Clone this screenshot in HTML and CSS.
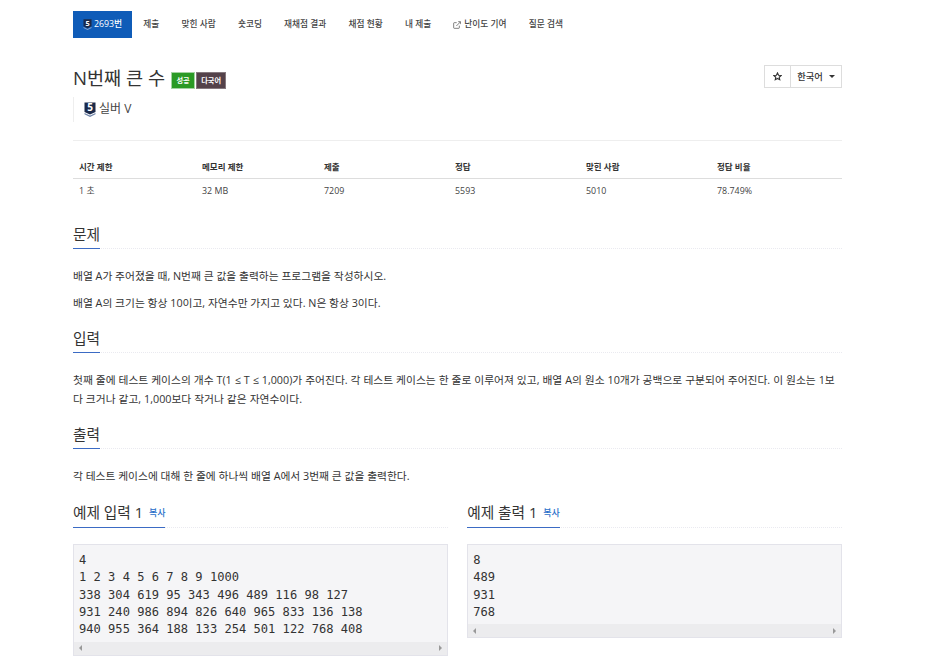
FILE: index.html
```html
<!DOCTYPE html>
<html lang="ko">
<head>
<meta charset="utf-8">
<title>N번째 큰 수</title>
<link rel="stylesheet" href="styles.css">
</head>
<body>
<div class="page">
  <nav class="tabs">
    <a class="tab active"><svg class="tier-s" viewBox="0 0 12 15"><path d="M.5 .5h11v9.500L6 12.500 .5 10z" fill="#1b2a4a"/><path d="M.5 11 6 13.500l5.500-2.500v1.200L6 15 .5 12.200z" fill="#8fa3c4"/><text x="6" y="9" class="tier-t">5</text></svg>2693번</a>
    <a class="tab">제출</a>
    <a class="tab">맞힌 사람</a>
    <a class="tab">숏코딩</a>
    <a class="tab">재채점 결과</a>
    <a class="tab">채점 현황</a>
    <a class="tab">내 제출</a>
    <a class="tab"><svg class="ext" viewBox="0 0 12 12"><path d="M9.500 7v3a1 1 0 0 1-1 1H2a1 1 0 0 1-1-1V3.500a1 1 0 0 1 1-1h3.500" fill="none" stroke="#444" stroke-width="1"/><path d="M5 7.500 11 1.500M7.800 1H11.500V4.700" fill="none" stroke="#444" stroke-width="1"/></svg>난이도 기여</a>
    <a class="tab">질문 검색</a>
  </nav>

  <header class="title-row">
    <div class="title-main">
      <h1 class="title">N번째 큰 수</h1>
      <span class="label green">성공</span>
      <span class="label dark">다국어</span>
    </div>
    <div class="btns">
      <button class="btn star"><svg class="star-i" viewBox="0 0 12 12"><path d="M6 1.200l1.450 3.100 3.350.4-2.500 2.300.7 3.300L6 8.650 3 10.300l.7-3.300-2.500-2.300 3.350-.4z" fill="none" stroke="#333" stroke-width="1.500"/></svg></button>
      <button class="btn lang">한국어<span class="caret"></span></button>
    </div>
  </header>

  <div class="tier-quote">
    <svg class="tier-l" viewBox="0 0 12 15"><path d="M.5 .5h11v9.500L6 12.500 .5 10z" fill="#1b2a4a"/><path d="M.5 11 6 13.500l5.500-2.500v1.200L6 15 .5 12.200z" fill="#6f84a8"/><text x="6" y="9" class="tier-t">5</text></svg>
    <span>실버 V</span>
  </div>

  <hr class="rule">

  <table class="info">
    <thead>
      <tr><th>시간 제한</th><th>메모리 제한</th><th>제출</th><th>정답</th><th>맞힌 사람</th><th>정답 비율</th></tr>
    </thead>
    <tbody>
      <tr><td>1 초</td><td>32 MB</td><td>7209</td><td>5593</td><td>5010</td><td>78.749%</td></tr>
    </tbody>
  </table>

  <section class="sec first">
    <div class="headline"><h2>문제</h2></div>
    <p>배열 A가 주어졌을 때, N번째 큰 값을 출력하는 프로그램을 작성하시오.</p>
    <p>배열 A의 크기는 항상 10이고, 자연수만 가지고 있다. N은 항상 3이다.</p>
  </section>

  <section class="sec">
    <div class="headline"><h2>입력</h2></div>
    <p class="wide">첫째 줄에 테스트 케이스의 개수 T(1 ≤ T ≤ 1,000)가 주어진다. 각 테스트 케이스는 한 줄로 이루어져 있고, 배열 A의 원소 10개가 공백으로 구분되어 주어진다. 이 원소는 1보다 크거나 같고, 1,000보다 작거나 같은 자연수이다.</p>
  </section>

  <section class="sec">
    <div class="headline"><h2>출력</h2></div>
    <p>각 테스트 케이스에 대해 한 줄에 하나씩 배열 A에서 3번째 큰 값을 출력한다.</p>
  </section>

  <div class="samples">
    <section class="sample">
      <div class="headline"><h2>예제 입력 1 <a class="copy">복사</a></h2></div>
      <div class="pre">
        <pre>4
1 2 3 4 5 6 7 8 9 1000
338 304 619 95 343 496 489 116 98 127
931 240 986 894 826 640 965 833 136 138
940 955 364 188 133 254 501 122 768 408</pre>
        <div class="sbar"><span class="arr left"></span><span class="arr right"></span></div>
      </div>
    </section>
    <section class="sample">
      <div class="headline"><h2>예제 출력 1 <a class="copy">복사</a></h2></div>
      <div class="pre">
        <pre>8
489
931
768</pre>
        <div class="sbar"><span class="arr left"></span><span class="arr right"></span></div>
      </div>
    </section>
  </div>
</div>
</body>
</html>
```

FILE: styles.css
```css
* { box-sizing: border-box; }
html, body { margin: 0; padding: 0; height: 100%; overflow: hidden; background: #fff; }
body {
  font-family: "Open Sans", "Noto Sans CJK KR", sans-serif;
  font-size: 10.780px;
  line-height: 1.7;
  color: #333;
}
.page { width: 769px; margin: 0 0 0 73px; padding-top: 11px; }

.tabs { display: flex; height: 27px; align-items: stretch; }
.tab {
  display: flex; align-items: center;
  padding: 0 11.100px; font-size: 8.700px; color: #444;
  white-space: nowrap; font-weight: 500;
}
.tab.active { background: #0f5cb8; color: #fff; padding: 0 10px; font-size: 8.800px; }
.tier-s { width: 9px; height: 11px; margin-right: 2px; overflow: visible; }
.tier-t { font: bold 10px/1 "Open Sans", sans-serif; fill: #fff; text-anchor: middle; }
.ext { width: 8px; height: 8px; margin-right: 3px; }

.title-row { display: flex; justify-content: space-between; align-items: flex-start; margin-top: 27px; height: 26px; }
.title-main { display: flex; align-items: center; gap: 1px; }
.title { margin: 0 5px 0 0; font-size: 18.600px; font-weight: 400; line-height: 26px; color: #333; }
.label { font-size: 7.200px; line-height: 15px; height: 17px; color: #fff; margin-top: 5px; font-weight: 600; border: 1px solid transparent; text-align: center; }
.green { background: #2a9a25; border-color: #a3d3a1; width: 24px; }
.dark { background: #54424a; border-color: #85797e; width: 30px; }
.btns { display: flex; }
.btn { height: 23px; background: #fff; border: 1px solid #ddd; font: 500 9.300px/1.500 "Open Sans", "Noto Sans CJK KR", sans-serif; color: #333; padding: 0; display: flex; align-items: center; justify-content: center; }
.star { width: 27px; }
.lang { width: 52px; margin-left: -1px; gap: 6px; }
.star-i { width: 9px; height: 9px; }
.caret { width: 0; height: 0; border-left: 3px solid transparent; border-right: 3px solid transparent; border-top: 3px solid #333; }

.tier-quote { display: flex; align-items: center; height: 25px; margin-top: 6px; border-left: 1px solid #eee; padding-left: 10px; font-size: 12px; color: #444; gap: 3px; }
.tier-l { width: 12px; height: 15px; overflow: visible; }

.rule { border: 0; border-top: 1px solid #eee; margin: 18px 0 0; }

.info { width: 100%; border-collapse: collapse; margin-top: 15px; table-layout: fixed; font-size: 8.500px; }
.info th { text-align: left; font-weight: 700; padding: 0 6px; height: 22px; border-bottom: 1px solid #ddd; color: #333; }
.info td { padding: 0 6px; height: 25px; color: #444; font-size: 8.900px; }
.info th:nth-child(1) { width: 123px; }
.info th:nth-child(2) { width: 122px; }
.info th:nth-child(3) { width: 131px; }
.info th:nth-child(4) { width: 131px; }
.info th:nth-child(5) { width: 131px; }

.sec { margin-top: 12px; }
.sec.first { margin-top: 17px; }
.headline { border-bottom: 1px dotted #eaeaf0; height: 29px; margin-bottom: 17px; display: flex; }
.headline h2 {
  margin: 0; font-size: 14.700px; font-weight: 400; line-height: 28px; height: 29px;
  border-bottom: 1px solid #3b6bc4; color: #333; white-space: nowrap;
}
.sec p { margin: 0 0 8px; line-height: 19px; color: #333; word-break: break-all; }
.sec p.wide { word-spacing: .15px; }

.samples { display: flex; gap: 19.500px; margin-top: 13px; }
.sample { flex: 1; min-width: 0; }
.sample .headline { margin-bottom: 16px; height: 30px; }
.sample .headline h2 { height: 30px; }
.copy { font-size: 9px; color: #2a6fc9; margin-left: 2px; vertical-align: 2px; font-weight: 500; }
.pre { background: #f5f5f7; border: 1px solid #e3e3ea; }
.pre pre { margin: 0; padding: 7px 6px 3px 5px; font: 12.080px/17.330px "DejaVu Sans Mono", monospace; color: #333; overflow: hidden; }
.sbar { height: 13px; background: #ececee; display: flex; justify-content: space-between; align-items: center; padding: 0 5px; }
.arr { width: 0; height: 0; border-top: 3px solid transparent; border-bottom: 3px solid transparent; }
.left { border-right: 3px solid #999; }
.right { border-left: 3px solid #999; }
```
